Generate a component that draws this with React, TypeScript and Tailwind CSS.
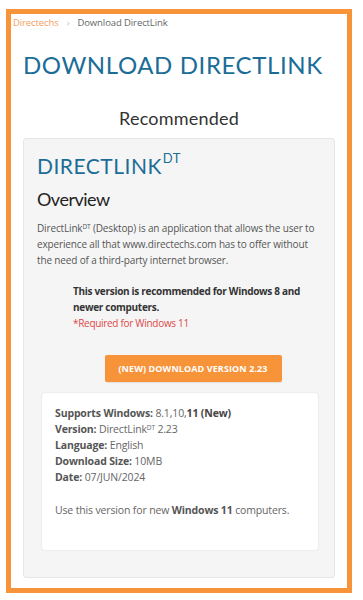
export default function App() {
  return (
    <div className="w-[363px] h-[600px] bg-white pt-[9px] pl-[6px] font-['Open_Sans',sans-serif]">
      <div className="w-[346px] h-[584px] border-[5px] border-[#f7943a] px-[12px] flex flex-col">
        <div className="flex items-center text-[9.5px] leading-[14px] mt-[2px] -ml-[10px] text-[#666] tracking-[-0.1px]">
          <span className="text-[#f5a060]">Directechs</span>
          <span className="mx-[8px] text-[#bbb]">›</span>
          <span>Download DirectLink</span>
        </div>
        <h1 className="mt-[20px] text-[24px] leading-[30px] text-[#1b6d98] font-['Lato',sans-serif] tracking-[0.6px] whitespace-nowrap">
          DOWNLOAD DIRECTLINK
        </h1>
        <h2 className="mt-[27px] text-center text-[18px] leading-[22px] text-[#333] font-['Lato',sans-serif] tracking-[0.2px]">Recommended</h2>
        <div className="mt-[9px] bg-[#f5f5f5] border border-[#e6e6e6] rounded-[3px] h-[440px] px-[13px]">
          <div className="mt-[14px] text-[21px] leading-[26px] text-[#1b6d98] font-['Lato',sans-serif] tracking-[0.5px]">
            DIRECTLINK<span className="inline-block align-top text-[13px] leading-none -mt-[1px] ml-[1px]">DT</span>
          </div>
          <div className="mt-[8px] text-[18px] leading-[24px] text-[#222] font-['Lato',sans-serif] tracking-[-0.5px]">Overview</div>
          <p className="mt-[9px] text-[10px] leading-[16px] text-[#555] tracking-[-0.15px]">
            DirectLink<sup className="text-[6.5px]">DT</sup> (Desktop) is an application that allows the user to experience all that www.directechs.com has to offer without the need of a third-party internet browser.
          </p>
          <div className="mt-[15px] ml-[36px] mr-[8px]">
            <div className="text-[10px] leading-[16px] tracking-[-0.3px]">
              <p className="font-bold text-[#333]">This version is recommended for Windows 8 and newer computers.</p>
              <p className="text-[#e04848]">*Required for Windows 11</p>
            </div>
            <div className="mt-[24px] flex justify-center">
              <button className="w-[177px] h-[27px] bg-[#f7943a] rounded-[2px] text-white text-[9px] font-bold tracking-[0.1px] shadow-[0_1px_1px_rgba(0,0,0,0.08)]">
                (NEW) DOWNLOAD VERSION 2.23
              </button>
            </div>
          </div>
          <div className="mt-[10px] ml-[4px] mr-[2px] bg-white rounded-[4px] border border-[#eee] h-[159px] px-[13px] pt-[12px] text-[10.5px] leading-[16px] text-[#666] tracking-[-0.15px]">
            <div><b className="text-[#555]">Supports Windows:</b> 8.1,10,<b className="text-[#444]">11 (New)</b></div>
            <div><b className="text-[#555]">Version:</b> DirectLink<sup className="text-[6.5px]">DT</sup> 2.23</div>
            <div><b className="text-[#555]">Language:</b> English</div>
            <div><b className="text-[#555]">Download Size:</b> 10MB</div>
            <div><b className="text-[#555]">Date:</b> 07/JUN/2024</div>
            <div className="mt-[17px]">Use this version for new <b className="text-[#555]">Windows 11</b> computers.</div>
          </div>
        </div>
      </div>
    </div>
  )
}
